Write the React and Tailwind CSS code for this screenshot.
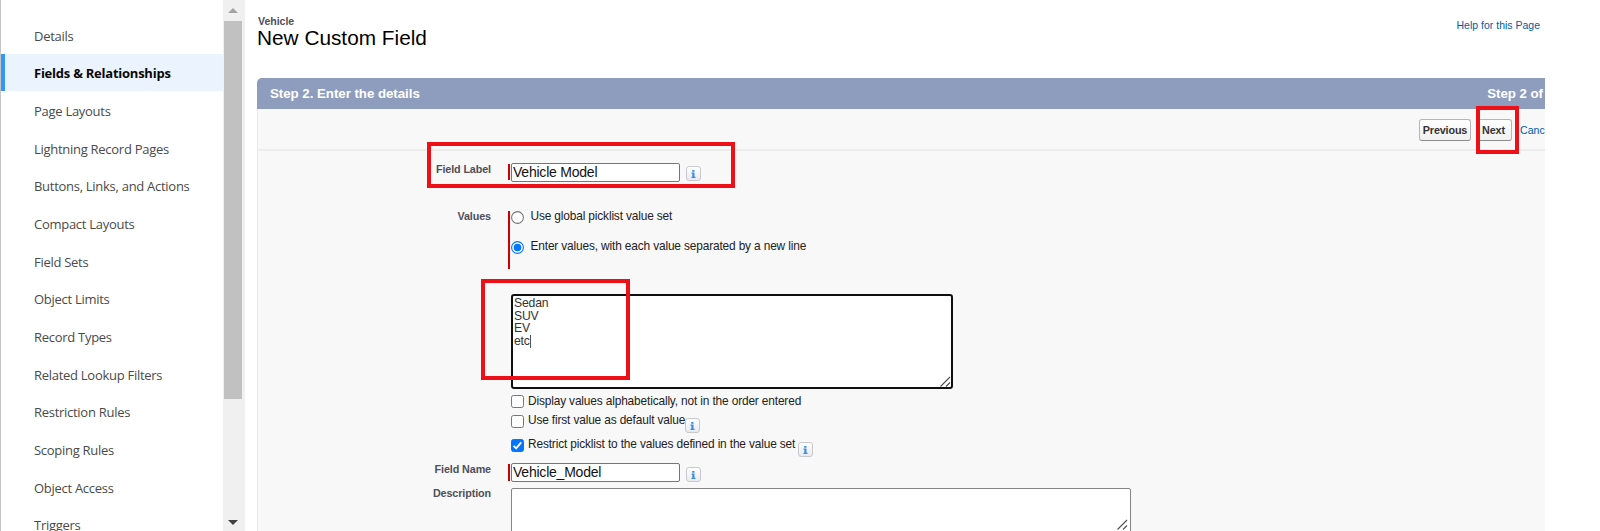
const navItems = [
  'Details',
  'Fields & Relationships',
  'Page Layouts',
  'Lightning Record Pages',
  'Buttons, Links, and Actions',
  'Compact Layouts',
  'Field Sets',
  'Object Limits',
  'Record Types',
  'Related Lookup Filters',
  'Restriction Rules',
  'Scoping Rules',
  'Object Access',
  'Triggers',
];

function Sidebar() {
  return (
    <nav className="h-full w-[223px] shrink-0 overflow-hidden border-l border-[#c4c4c4] pt-[16.4px] font-['Open_Sans','Noto_Sans',sans-serif]">
      {navItems.map((item, i) => (
        <div
          key={item}
          className={
            i === 1
              ? 'mb-[0.67px] flex h-[37px] items-center border-l-4 border-[#3296fa] bg-[#ebf4fe] pt-[1.5px] pl-[29px] text-[13px] font-bold tracking-[-0.24px] text-[#080707]'
              : 'flex h-[37.67px] items-center pt-[2.4px] pl-[33px] text-[13px] tracking-[-0.28px] text-[#4a4a4a]'
          }
        >
          <span className="whitespace-nowrap">{item}</span>
        </div>
      ))}
    </nav>
  );
}

function Scrollbar() {
  return (
    <div className="flex h-full w-[22px] shrink-0 flex-col items-center bg-[#f0f0f0] pr-[2px]">
      <div className="flex h-[21px] w-full items-center justify-center">
        <svg width="10" height="5" viewBox="0 0 10 5"><path d="M0 5L5 0l5 5z" fill="#a3a3a3" /></svg>
      </div>
      <div className="h-[378px] w-[18px] bg-[#c1c1c1]" />
      <div className="flex-1" />
      <div className="flex h-[18px] w-full items-center justify-center">
        <svg width="10" height="5" viewBox="0 0 10 5"><path d="M0 0L5 5l5-5z" fill="#404040" /></svg>
      </div>
    </div>
  );
}

function Info({ className = '' }) {
  return (
    <span className={`flex size-[15px] shrink-0 items-center justify-center rounded-[3px] border border-[#c9c9cd] bg-linear-to-b from-white to-[#e9eaf0] ${className}`}>
      <svg width="5" height="8" viewBox="0 0 5 8" fill="#3b8ede">
        <path d="M1.2 0h2.3v1.7H1.2zM.5 2.6h3v4.2h1V8H.5V6.8h.8V3.8H.5z" />
      </svg>
    </span>
  );
}

function Label({ children, className = '' }) {
  return (
    <div className={`w-[233px] shrink-0 text-right text-[10.8px] leading-[14px] font-bold tracking-[-0.12px] whitespace-nowrap text-[#4f4f5b] ${className}`}>
      {children}
    </div>
  );
}

function TextField({ value }) {
  return (
    <div className="flex h-[19px] w-[169px] items-center rounded-[2px] border border-[#767676] bg-white pl-px text-[14px] tracking-[-0.22px] whitespace-nowrap text-[#111]">
      {value}
    </div>
  );
}

function Radio({ checked }) {
  return (
    <svg width="13" height="13" viewBox="0 0 13 13" className="shrink-0">
      <circle cx="6.5" cy="6.5" r="5.9" fill="#fff" stroke={checked ? '#0075ff' : '#767676'} strokeWidth="1.1" />
      {checked && <circle cx="6.5" cy="6.5" r="3.8" fill="#0075ff" />}
    </svg>
  );
}

function Checkbox({ checked }) {
  return (
    <svg width="13" height="13" viewBox="0 0 13 13" className="shrink-0">
      <rect x=".5" y=".5" width="12" height="12" rx="2" fill={checked ? '#0075ff' : '#fff'} stroke={checked ? '#0075ff' : '#767676'} />
      {checked && <path d="M2.6 6.8l2.6 2.6 5-6" fill="none" stroke="#fff" strokeWidth="1.8" />}
    </svg>
  );
}

function Grip() {
  return (
    <svg width="11" height="11" viewBox="0 0 11 11" className="shrink-0">
      <path d="M.5 10.5L10 1M6 10.5l4-4" stroke="#505050" strokeWidth="1.1" fill="none" />
    </svg>
  );
}

function Button({ children, className }) {
  return (
    <span className={`flex h-[22px] items-center justify-center rounded-[3px] border border-[#b5b5b5] border-b-[#8c8c8c] bg-linear-to-b from-white to-[#f0f0f0] text-[10.8px] font-bold tracking-[-0.16px] text-[#333] ${className}`}>
      {children}
    </span>
  );
}

function Form() {
  return (
    <div className="flex flex-col pt-[12px]">
      <div className="flex h-[20px]">
        <Label className="-mt-px">Field Label</Label>
        <div className="mt-[1px] ml-[17px] h-[16px] w-[2px] bg-[#c00]" />
        <div className="ml-[1px]"><TextField value="Vehicle Model" /></div>
        <Info className="mt-[3px] ml-[6px]" />
      </div>

      <div className="mt-[28px] flex h-[58px]">
        <Label className="-mt-[2px]">Values</Label>
        <div className="ml-[17px] w-[2px] bg-[#c00]" />
        <div className="ml-[1px] flex flex-col text-[11.9px] leading-[13px] tracking-[-0.15px] whitespace-nowrap text-[#222]">
          <div className="flex items-start gap-[6.5px]"><Radio /><span className="-mt-px">Use global picklist value set</span></div>
          <div className="mt-[17px] flex items-start gap-[6.5px]"><Radio checked /><span className="-mt-px">Enter values, with each value separated by a new line</span></div>
        </div>
      </div>

      <div className="mt-[25px] ml-[253px] flex h-[95px] w-[442px] items-end rounded-[3px] border-2 border-[#101010] bg-white">
        <div className="flex flex-1 items-start self-stretch pt-px pl-px text-[12.2px] leading-[12.7px] tracking-[-0.18px] text-[#333]">
          <div className="flex flex-col items-start">
            <span>Sedan</span>
            <span>SUV</span>
            <span>EV</span>
            <span className="-mr-px border-r border-[#555]">etc</span>
          </div>
        </div>
        <Grip />
      </div>

      <div className="ml-[253px] flex flex-col text-[11.9px] leading-[13px] tracking-[-0.15px] whitespace-nowrap text-[#222]">
        <div className="mt-[6px] flex h-[13px] items-center gap-[4px]"><Checkbox /><span>Display values alphabetically, not in the order entered</span></div>
        <div className="mt-[7px] flex h-[13px] items-start"><Checkbox /><span className="-mt-px ml-[4px]">Use first value as default value</span><Info className="mt-[3px]" /></div>
        <div className="mt-[11px] flex h-[13px] items-start"><Checkbox checked /><span className="-mt-px ml-[4px]">Restrict picklist to the values defined in the value set</span><Info className="mt-[3px] ml-[3px]" /></div>
      </div>

      <div className="mt-[11px] flex h-[20px]">
        <Label className="-mt-px">Field Name</Label>
        <div className="mt-[1px] ml-[17px] h-[17px] w-[2px] bg-[#c00]" />
        <div className="ml-[1px]"><TextField value="Vehicle_Model" /></div>
        <Info className="mt-[4px] ml-[6px]" />
      </div>

      <div className="mt-[5px] flex">
        <Label className="-mt-[2px]">Description</Label>
        <div className="ml-[20px] flex h-[50px] w-[620px] items-start justify-end rounded-[2px] border border-[#858585] bg-white pt-[30px] pr-[2px]">
          <Grip />
        </div>
      </div>
    </div>
  );
}

export default function App() {
  return (
    <div className="relative flex h-[531px] w-[1600px] overflow-hidden bg-white font-['Liberation_Sans',Arial,sans-serif]">
      <Sidebar />
      <Scrollbar />
      <main className="flex h-full w-[1300px] shrink-0 flex-col overflow-hidden pl-[12px]">
        <header className="flex h-[78px] shrink-0 justify-between pr-[5px]">
          <div className="pt-[14px]">
            <div className="pl-px text-[10.6px] leading-[14px] font-bold tracking-[-0.05px] text-[#4f4f5b]">Vehicle</div>
            <h1 className="-mt-px text-[20.8px] leading-[21px] whitespace-nowrap text-black">New Custom Field</h1>
          </div>
          <a className="pt-[18px] text-[10.5px] leading-[14px] text-[#015ba7]">Help for this Page</a>
        </header>
        <section className="flex flex-1 flex-col overflow-hidden rounded-tl-[5px] bg-[#f8f8f8]">
          <div className="flex h-[31px] shrink-0 items-center justify-between bg-[#8e9dbe] pr-[2px] pl-[13px] text-[13.3px] font-bold tracking-[-0.04px] whitespace-nowrap text-white">
            <span>Step 2. Enter the details</span>
            <span>Step 2 of</span>
          </div>
          <div className="flex flex-1 flex-col border-l border-[#eaeaea]">
            <div className="flex h-[42px] shrink-0 justify-end border-b-2 border-[#ececec] pt-[10px]">
              <Button className="w-[52px]">Previous</Button>
              <Button className="ml-[6px] w-[35px] pr-[2px]">Next</Button>
              <span className="ml-[8px] w-[25px] overflow-hidden text-[10.6px] leading-[22px] text-[#015ba7]">Cancel</span>
            </div>
            <Form />
          </div>
        </section>
      </main>

      {/* Highlight frames laid over the form */}
      <div className="absolute top-[142px] left-[427px] h-[46px] w-[308px] border-4 border-[#ed1019]" />
      <div className="absolute top-[279px] left-[481px] h-[101px] w-[149px] border-4 border-[#ed1019]" />
      <div className="absolute top-[106px] left-[1476px] h-[48px] w-[43px] border-4 border-[#ed1019]" />
    </div>
  );
}
